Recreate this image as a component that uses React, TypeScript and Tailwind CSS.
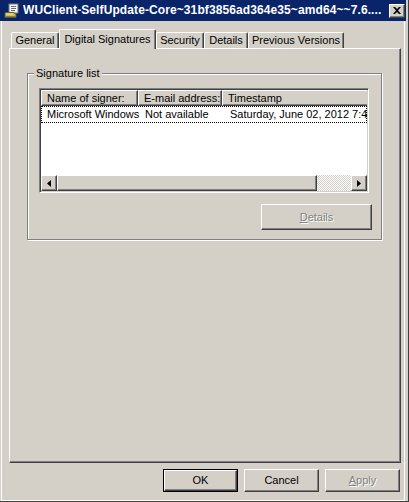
import type { ReactNode } from "react";

const raised =
  "border border-t-white border-l-white border-r-[#404040] border-b-[#404040] shadow-[inset_-1px_-1px_0_#808080]";

function TitleIcon() {
  return (
    <svg width="16" height="16" viewBox="0 0 16 16" className="shrink-0">
      <rect x="5" y="1" width="9" height="9" fill="#f4f4f4" stroke="#7a7a7a" />
      <path d="M7 3.5h5M7 5.5h5M7 7.5h4" stroke="#6a6a6a" strokeWidth="1" />
      <path d="M1 9.5h9l2 2v3H1z" fill="#c8c060" stroke="#5a5a30" />
      <path d="M2 11h7" stroke="#f0ec90" />
      <rect x="1" y="13" width="11" height="1" fill="#8a8040" />
    </svg>
  );
}

function Arrow({ dir }: { dir: "left" | "right" }) {
  return (
    <svg width="4" height="7" viewBox="0 0 4 7">
      {dir === "left" ? <path d="M4 0v7L0 3.5z" fill="#000" /> : <path d="M0 0v7l4-3.5z" fill="#000" />}
    </svg>
  );
}

function Tab({ label, selected, width }: { label: string; selected?: boolean; width: string }) {
  if (selected) {
    return (
      <div
        className={`${width} relative z-10 h-[20px] -mb-[1px] flex justify-center pt-[3px] bg-[#d4d0c8] border-l border-t border-r border-t-white border-l-white border-r-[#404040] shadow-[inset_-1px_0_0_#808080] rounded-tl-[2px] rounded-tr-[2px]`}
      >
        {label}
      </div>
    );
  }
  return (
    <div
      className={`${width} h-[16px] flex justify-center pt-[1px] border-l border-t border-r border-t-white border-l-white border-r-[#404040] shadow-[inset_-1px_0_0_#808080] rounded-tl-[2px] rounded-tr-[2px]`}
    >
      {label}
    </div>
  );
}

function Button({
  children,
  width,
  height,
  disabled,
  isDefault,
}: {
  children: ReactNode;
  width: string;
  height: string;
  disabled?: boolean;
  isDefault?: boolean;
}) {
  const text = disabled ? "text-[#808080] [text-shadow:1px_1px_0_#ffffff]" : "text-black";
  if (isDefault) {
    return (
      <div className={`${width} ${height} border border-black flex`}>
        <div className={`flex-1 flex items-center justify-center ${raised} ${text}`}>{children}</div>
      </div>
    );
  }
  return <div className={`${width} ${height} flex items-center justify-center ${raised} ${text}`}>{children}</div>;
}

function HeaderCell({ label, width }: { label: string; width: string }) {
  return (
    <div className={`${width} shrink-0 h-[16px] pl-[5px] flex items-center ${raised} border-t-white`}>{label}</div>
  );
}

export default function App() {
  return (
    <div className="w-[409px] h-[502px] bg-[#d4d0c8] flex flex-col border-r border-b border-[#404040] font-['Liberation_Sans',Arial,sans-serif] text-[11px] leading-[13px] text-black overflow-hidden select-none">
      {/* Title bar */}
      <div className="h-[21px] mr-[2px] shrink-0 bg-[#0a246a] flex items-center pl-[4px] pr-[1px]">
        <TitleIcon />
        <div className="ml-[3px] flex-1 text-white font-bold text-[12px] tracking-[0.1px] whitespace-nowrap overflow-hidden">
          WUClient-SelfUpdate-Core~31bf3856ad364e35~amd64~~7.6....
        </div>
        <div className={`w-[16px] h-[14px] bg-[#d4d0c8] flex items-center justify-center ${raised}`}>
          <svg width="8" height="7" viewBox="0 0 8 7">
            <path d="M0 0h2l2 2 2-2h2L5 3.5 8 7H6L4 5 2 7H0l3-3.5z" fill="#000" />
          </svg>
        </div>
      </div>

      {/* Body */}
      <div className="flex-1 flex flex-col ml-[1px] mr-[3px] border-l border-white border-r border-b border-[#808080] pl-[7px] pt-[8px]">
        {/* Tabs */}
        <div className="h-[19px] flex items-end pl-[2px]">
          <Tab label="General" width="w-[48px]" />
          <Tab label="Digital Signatures" width="w-[97px]" selected />
          <Tab label="Security" width="w-[48px]" />
          <Tab label="Details" width="w-[44px]" />
          <Tab label="Previous Versions" width="w-[96px]" />
        </div>

        {/* Panel */}
        <div className={`w-[392px] h-[415px] ${raised}`}>
          {/* Group box */}
          <div className="relative ml-[17px] mt-[24px] w-[355px] flex flex-col pl-[11px] pr-[9px] pt-[14px] pb-[9px] border border-[#808080] shadow-[inset_1px_1px_0_#ffffff,1px_1px_0_#ffffff]">
            <span className="absolute left-[6px] -top-[7px] px-[2px] bg-[#d4d0c8]">Signature list</span>

            {/* List view */}
            <div className="w-[330px] h-[105px] p-[1px] flex flex-col border border-t-[#808080] border-l-[#808080] border-r-white border-b-white shadow-[inset_1px_1px_0_#404040,inset_-1px_-1px_0_#d4d0c8]">
              <div className="flex-1 flex flex-col bg-white overflow-hidden">
                <div className="flex shrink-0 bg-[#d4d0c8]">
                  <HeaderCell label="Name of signer:" width="w-[97px]" />
                  <HeaderCell label="E-mail address:" width="w-[84px]" />
                  <HeaderCell label="Timestamp" width="w-[160px]" />
                </div>
                <div className="h-[17px] flex items-center border border-dotted border-black whitespace-nowrap">
                  <div className="w-[96px] shrink-0 pl-[5px]">Microsoft Windows</div>
                  <div className="w-[84px] shrink-0 pl-[7px]">Not available</div>
                  <div className="shrink-0 pl-[8px]">Saturday, June 02, 2012 7:44 PM</div>
                </div>
                <div className="flex-1" />
                {/* Horizontal scrollbar */}
                <div className="h-[16px] flex shrink-0 bg-[#d4d0c8]">
                  <div className={`w-[16px] flex items-center justify-center ${raised}`}>
                    <Arrow dir="left" />
                  </div>
                  <div className={`w-[260px] ${raised}`} />
                  <div className="flex-1 bg-[image:repeating-conic-gradient(#ffffff_0%_25%,#d4d0c8_0%_50%)] bg-[length:2px_2px]" />
                  <div className={`w-[16px] flex items-center justify-center ${raised}`}>
                    <Arrow dir="right" />
                  </div>
                </div>
              </div>
            </div>

            <div className="mt-[11px] self-end">
              <Button width="w-[111px]" height="h-[26px]" disabled>
                <span>
                  <span className="underline">D</span>etails
                </span>
              </Button>
            </div>
          </div>
        </div>

        {/* Dialog buttons */}
        <div className="mt-[6px] flex justify-end gap-[6px] pr-[4px]">
          <Button width="w-[75px]" height="h-[23px]" isDefault>
            OK
          </Button>
          <Button width="w-[75px]" height="h-[23px]">
            Cancel
          </Button>
          <Button width="w-[75px]" height="h-[23px]" disabled>
            <span>
              <span className="underline">A</span>pply
            </span>
          </Button>
        </div>
      </div>
    </div>
  );
}
